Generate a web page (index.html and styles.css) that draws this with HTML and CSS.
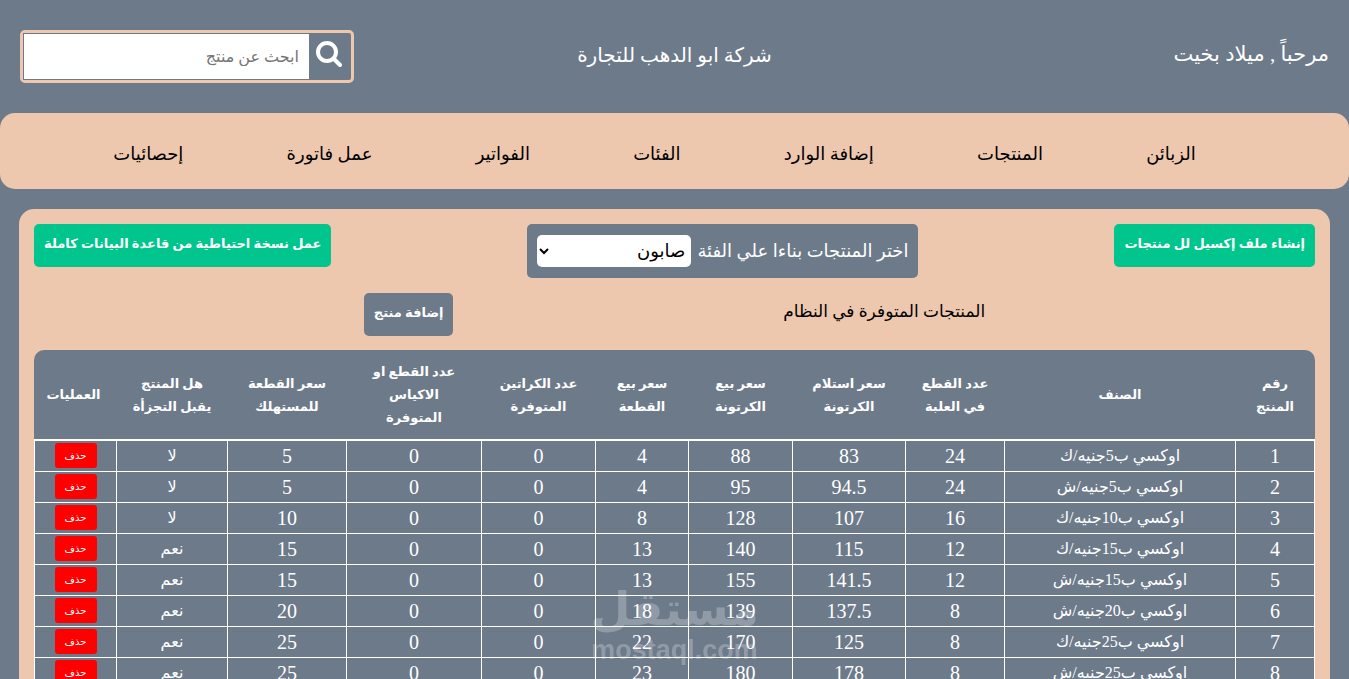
FILE: index.html
```
<!DOCTYPE html>
<html lang="ar" dir="rtl">
<head>
  <meta charset="UTF-8">
  <meta name="viewport" content="width=device-width, initial-scale=1.0">
  <title>المنتجات</title>
  <link rel="stylesheet" href="styles.css">
</head>
<body>
  <header>
    <div class="welcome">مرحباً , ميلاد بخيت</div>
    <div class="company">شركة ابو الدهب للتجارة</div>
    <form class="search">
      <button type="submit" aria-label="بحث">
        <svg viewBox="0 0 26 26" width="26" height="26" fill="none" stroke="#fff" stroke-linecap="round">
          <circle cx="11" cy="11" r="9" stroke-width="4"/>
          <path d="M18 18l6 6" stroke-width="4"/>
        </svg>
      </button>
      <input type="text" aria-label="ابحث عن منتج" placeholder="ابحث عن منتج">
    </form>
  </header>

  <nav>
    <ul>
      <li><a href="#">الزبائن</a></li>
      <li><a href="#">المنتجات</a></li>
      <li><a href="#">إضافة الوارد</a></li>
      <li><a href="#">الفئات</a></li>
      <li><a href="#">الفواتير</a></li>
      <li><a href="#">عمل فاتورة</a></li>
      <li><a href="#">إحصائيات</a></li>
    </ul>
  </nav>

  <main class="container">
    <div class="toolbar">
      <button class="btn green">إنشاء ملف إكسيل لل منتجات</button>
      <div class="category">
        <label for="category">اختر المنتجات بناءا علي الفئة</label>
        <select id="category">
          <option>صابون</option>
        </select>
      </div>
      <button class="btn green">عمل نسخة احتياطية من قاعدة البيانات كاملة</button>
    </div>

    <div class="title-row">
      <h1>المنتجات المتوفرة في النظام</h1>
      <button class="btn">إضافة منتج</button>
    </div>

    <table>
      <colgroup>
        <col class="col-id">
        <col class="col-name">
        <col class="col-pieces">
        <col class="col-receive">
        <col class="col-carton">
        <col class="col-piece">
        <col class="col-cartons">
        <col class="col-stock">
        <col class="col-consumer">
        <col class="col-split">
        <col class="col-actions">
      </colgroup>
      <thead>
        <tr>
          <th>رقم المنتج</th>
          <th>الصنف</th>
          <th>عدد القطع<br>في العلبة</th>
          <th>سعر استلام<br>الكرتونة</th>
          <th>سعر بيع<br>الكرتونة</th>
          <th>سعر بيع<br>القطعة</th>
          <th>عدد الكراتين<br>المتوفرة</th>
          <th>عدد القطع او<br>الاكياس<br>المتوفرة</th>
          <th>سعر القطعة<br>للمستهلك</th>
          <th>هل المنتج<br>يقبل التجزأة</th>
          <th>العمليات</th>
        </tr>
      </thead>
      <tbody>
        <tr><td>1</td><td class="text">اوكسي ب5جنيه/ك</td><td>24</td><td>83</td><td>88</td><td>4</td><td>0</td><td>0</td><td>5</td><td class="text">لا</td><td><button class="delete">حذف</button></td></tr>
        <tr><td>2</td><td class="text">اوكسي ب5جنيه/ش</td><td>24</td><td>94.5</td><td>95</td><td>4</td><td>0</td><td>0</td><td>5</td><td class="text">لا</td><td><button class="delete">حذف</button></td></tr>
        <tr><td>3</td><td class="text">اوكسي ب10جنيه/ك</td><td>16</td><td>107</td><td>128</td><td>8</td><td>0</td><td>0</td><td>10</td><td class="text">لا</td><td><button class="delete">حذف</button></td></tr>
        <tr><td>4</td><td class="text">اوكسي ب15جنيه/ك</td><td>12</td><td>115</td><td>140</td><td>13</td><td>0</td><td>0</td><td>15</td><td class="text">نعم</td><td><button class="delete">حذف</button></td></tr>
        <tr><td>5</td><td class="text">اوكسي ب15جنيه/ش</td><td>12</td><td>141.5</td><td>155</td><td>13</td><td>0</td><td>0</td><td>15</td><td class="text">نعم</td><td><button class="delete">حذف</button></td></tr>
        <tr><td>6</td><td class="text">اوكسي ب20جنيه/ش</td><td>8</td><td>137.5</td><td>139</td><td>18</td><td>0</td><td>0</td><td>20</td><td class="text">نعم</td><td><button class="delete">حذف</button></td></tr>
        <tr><td>7</td><td class="text">اوكسي ب25جنيه/ك</td><td>8</td><td>125</td><td>170</td><td>22</td><td>0</td><td>0</td><td>25</td><td class="text">نعم</td><td><button class="delete">حذف</button></td></tr>
        <tr><td>8</td><td class="text">اوكسي ب25جنيه/ش</td><td>8</td><td>178</td><td>180</td><td>23</td><td>0</td><td>0</td><td>25</td><td class="text">نعم</td><td><button class="delete">حذف</button></td></tr>
      </tbody>
    </table>
  </main>

  <div class="watermark">
    <span class="mark-ar">مستقل</span>
    <span class="mark-en">mostaql.com</span>
  </div>
</body>
</html>
```
FILE: styles.css
```
* {
  box-sizing: border-box;
}

body {
  margin: 0;
  background-color: #6d7a8a;
  font-family: "Liberation Serif", "DejaVu Sans", serif;
  font-size: 20px;
  color: #fff;
}

button, input, select {
  font-family: inherit;
}

header {
  display: grid;
  grid-template-columns: 1fr auto 1fr;
  align-items: center;
  padding: 30px 20px;
}

.welcome, .company {
  padding-bottom: 4px;
  font-size: 20px;
}

.welcome {
  font-size: 21px;
}

.search {
  justify-self: end;
  display: flex;
  width: 334px;
  height: 53px;
  border: 3px solid #edc7ae;
  border-radius: 5px;
}

.search button {
  width: 42px;
  padding: 0 2px 6px 0;
  border: none;
  background: none;
  cursor: pointer;
}

.search button svg {
  vertical-align: middle;
}

.search input {
  flex: 1;
  min-width: 0;
  padding: 0 10px;
  border: 1px solid #6d7a8a;
  border-right: none;
  background-color: #fff;
  font-size: 16px;
}

.search input::placeholder {
  color: #757575;
}

nav {
  padding: 10px;
  border-radius: 15px;
  background-color: #edc7ae;
}

nav ul {
  display: flex;
  justify-content: space-evenly;
  align-items: center;
  height: 56px;
  margin: 0;
  padding: 4px 40px 0 0;
  list-style: none;
}

nav a {
  color: #000;
  font-size: 18px;
  text-decoration: none;
}

.container {
  margin: 20px 19px;
  padding: 15px;
  border-radius: 15px;
  background-color: #edc7ae;
}

.toolbar {
  display: flex;
  justify-content: space-between;
  align-items: flex-start;
}

.btn {
  height: 43px;
  padding: 0 10px 4px;
  border: none;
  border-radius: 5px;
  background-color: #6d7a8a;
  color: #fff;
  font-size: 13px;
  font-weight: bold;
  cursor: pointer;
}

.green {
  background-color: #00c58c;
}

.category {
  display: flex;
  align-items: center;
  gap: 6px;
  height: 54px;
  padding: 0 10px;
  border-radius: 5px;
  background-color: #6d7a8a;
  font-size: 18px;
}

.category select {
  width: 154px;
  height: 32px;
  padding: 0 2px;
  border: none;
  border-radius: 5px;
  background-color: #fff;
  color: #000;
  font-size: 18px;
}

.title-row {
  display: flex;
  justify-content: space-evenly;
  margin: 15px 0 14px;
}

h1 {
  margin: 0;
  line-height: 38px;
  color: #000;
  font-size: 17px;
  font-weight: normal;
}

table {
  width: 100%;
  table-layout: fixed;
  border-collapse: collapse;
  border-radius: 10px;
  background-color: #6d7a8a;
  text-align: center;
}

.col-id { width: 79px; }
.col-pieces { width: 99px; }
.col-receive { width: 113px; }
.col-carton { width: 104px; }
.col-piece { width: 93px; }
.col-cartons { width: 114px; }
.col-stock { width: 135px; }
.col-consumer { width: 119px; }
.col-split { width: 111px; }
.col-actions { width: 82px; }

th {
  height: 90px;
  padding: 0 16px;
  border-bottom: 2px solid #fff;
  line-height: 23px;
  font-size: 13px;
  white-space: nowrap;
}

th:first-child {
  white-space: normal;
}

td {
  height: 31px;
  padding: 0;
  border: 1px solid #fff;
  line-height: 22px;
}

.text {
  font-size: 16px;
}

.delete {
  display: block;
  width: 42px;
  height: 25px;
  margin: 0 auto;
  padding: 0;
  border: none;
  border-radius: 3px;
  background-color: #f00;
  color: #fff;
  font-size: 10px;
  cursor: pointer;
}

.watermark {
  position: fixed;
  bottom: 14px;
  left: 50%;
  display: flex;
  flex-direction: column;
  align-items: center;
  width: 164px;
  margin-left: -82px;
  color: #fff;
  opacity: 0.25;
  pointer-events: none;
}

.mark-ar {
  font-size: 46px;
  font-weight: bold;
  line-height: 50px;
}

.mark-en {
  font-family: "Liberation Sans", sans-serif;
  font-size: 27px;
  font-weight: bold;
  line-height: 30px;
}
```
